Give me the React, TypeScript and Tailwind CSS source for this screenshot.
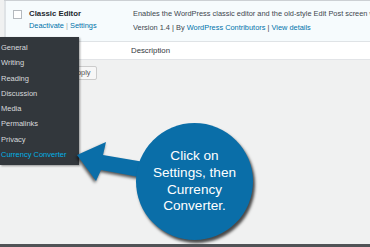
import React from "react";

const menuItems = [
  "General",
  "Writing",
  "Reading",
  "Discussion",
  "Media",
  "Permalinks",
  "Privacy",
  "Currency Converter",
];

export default function App() {
  return (
    <div className="relative w-[370px] h-[247px] overflow-hidden bg-[#f0f1f1] border-b-[3px] border-[#505356] font-['Liberation_Sans',Arial,sans-serif]">
      {/* plugin table */}
      <div className="ml-[4px] border-t border-[#ccd0d4]">
        <div className="flex h-[41px] bg-[#f6fbfd] border-l-[2px] border-[#00a0d2] border-b border-[#dfe3e6]">
          <div className="w-[23px] shrink-0 pl-[7px] pt-[9px]">
            <div className="w-[9px] h-[9px] bg-white border border-[#b4b9be]" />
          </div>
          <div className="w-[104px] shrink-0 pt-[8px]">
            <div className="text-[7.8px] leading-[10px] font-bold text-[#23282d]">Classic Editor</div>
            <div className="mt-[2px] text-[7.4px] leading-[10px] text-[#0073aa] whitespace-nowrap">
              Deactivate <span className="text-[#a0a5aa]">|</span> Settings
            </div>
          </div>
          <div className="flex-1 min-w-0 overflow-hidden pt-[8px] whitespace-nowrap">
            <div className="text-[7.4px] leading-[10px] text-[#40464d]">
              Enables the WordPress classic editor and the old-style Edit Post screen with TinyMCE
            </div>
            <div className="mt-[4px] text-[7.4px] leading-[10px] text-[#40464d]">
              Version 1.4 | By <span className="text-[#0073aa]">WordPress Contributors</span> |{" "}
              <span className="text-[#0073aa]">View details</span>
            </div>
          </div>
        </div>
        <div className="flex h-[18px] bg-white border-b border-[#e2e4e7]">
          <div className="w-[127px] shrink-0" />
          <div className="text-[7.8px] leading-[18px] text-[#32373c]">Description</div>
        </div>
      </div>

      {/* bulk actions */}
      <div className="flex mt-[6px] pl-[66px]">
        <div className="h-[14px] px-[5px] bg-[#f7f7f7] border border-[#cccccc] rounded-[2px] text-[7.4px] leading-[12px] text-[#555]">
          Apply
        </div>
      </div>

      {/* settings flyout menu */}
      <div className="absolute left-0 top-[37px] w-[79px] h-[128px] bg-[#32373c] pt-[3px] shadow-[1px_1px_2px_rgba(0,0,0,0.4)]">
        {menuItems.map((m, i) => (
          <div
            key={m}
            className={
              i === menuItems.length - 1
                ? "h-[15.25px] leading-[15.25px] pl-[1px] text-[7.5px] whitespace-nowrap text-[#00b2e6]"
                : "h-[15.25px] leading-[15.25px] pl-[1px] text-[7.5px] whitespace-nowrap text-[#d7dadd]"
            }
          >
            {m}
          </div>
        ))}
      </div>

      {/* arrow */}
      <svg
        className="absolute left-0 top-0 drop-shadow-[-1px_2px_1.5px_rgba(0,0,0,0.65)]"
        width="370"
        height="247"
        viewBox="0 0 370 247"
      >
        <polygon
          points="77,155 106,142 103,155 150,163 150,179 101,170 96,181"
          fill="#0a6ea8"
        />
      </svg>

      {/* callout circle */}
      <div className="absolute left-[136px] top-[123px] w-[117px] h-[117px] rounded-full bg-[#0a6ea8] shadow-[2px_3px_3px_rgba(0,0,0,0.7)] flex flex-col items-center justify-center text-white text-[13.6px] leading-[16.6px] text-center font-['Liberation_Sans',Arial,sans-serif]">
        <div>Click on</div>
        <div>Settings, then</div>
        <div>Currency</div>
        <div>Converter.</div>
      </div>
    </div>
  );
}
